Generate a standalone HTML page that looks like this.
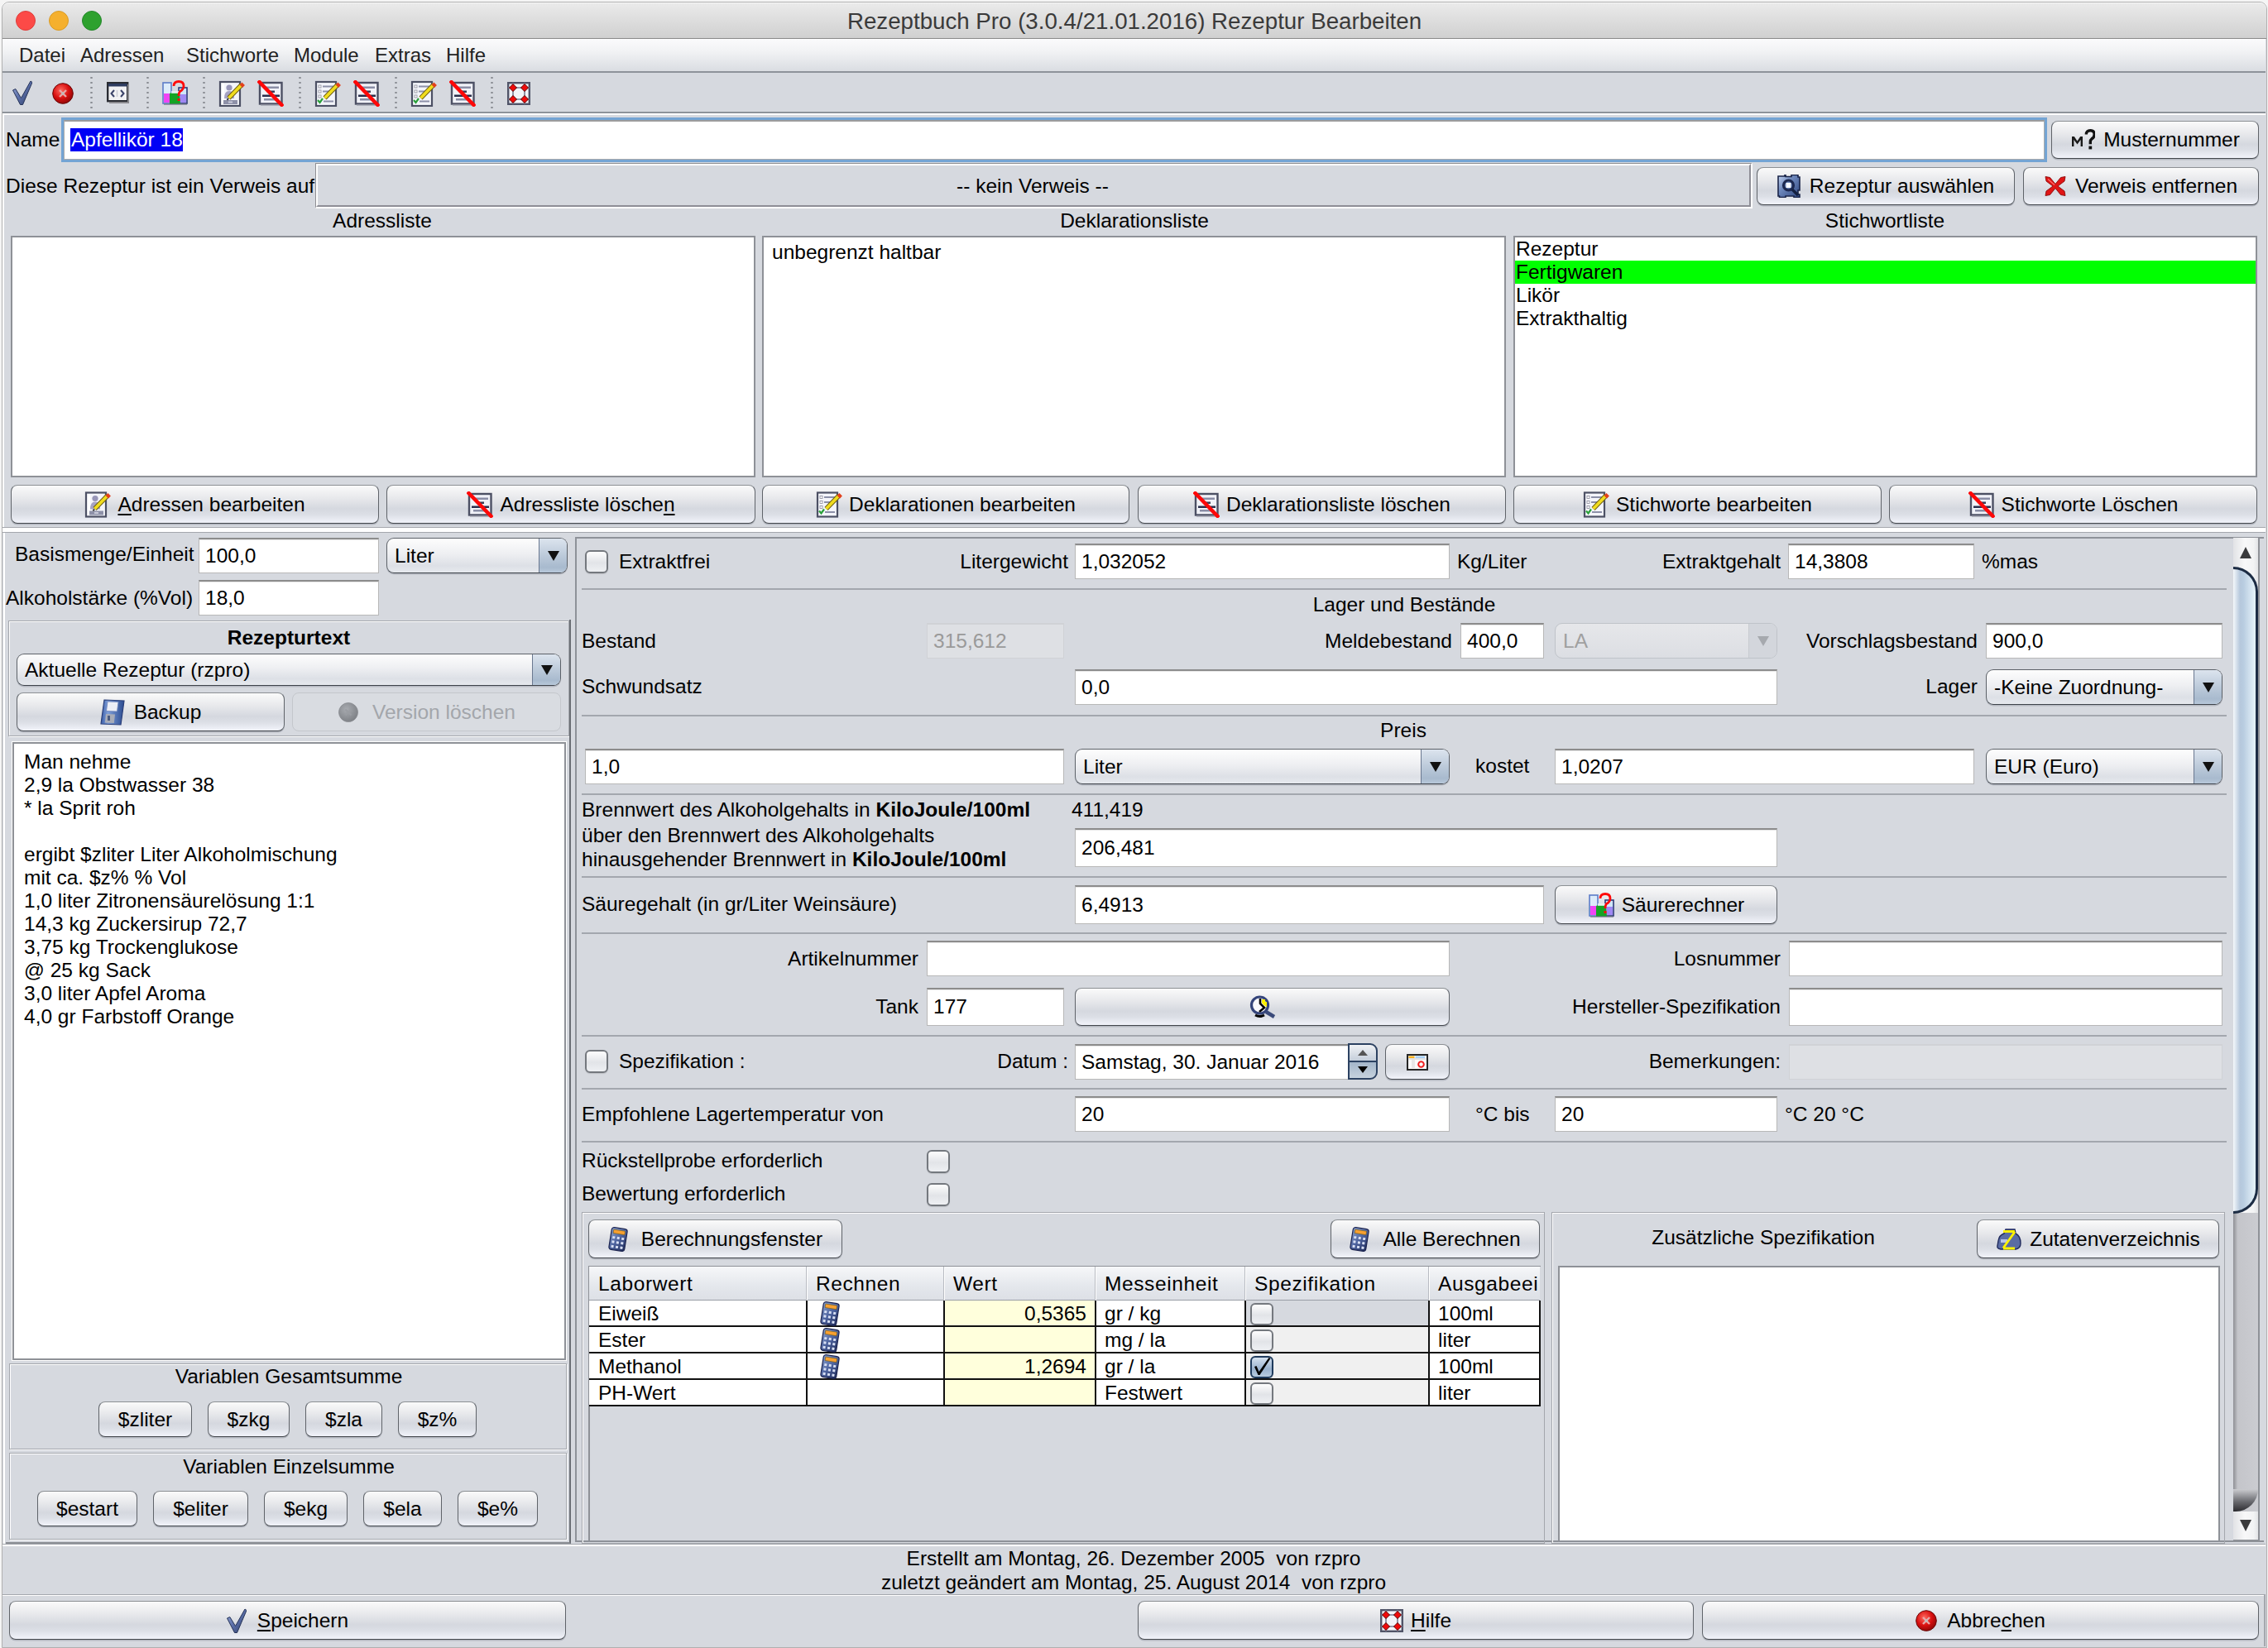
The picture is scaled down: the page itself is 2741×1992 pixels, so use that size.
<!DOCTYPE html><html><head><meta charset="utf-8"><style>
html,body{margin:0;padding:0;}
body{width:2741px;height:1992px;position:relative;overflow:hidden;background:#F5F5F5;font-family:"Liberation Sans",sans-serif;}
.t{position:absolute;white-space:pre;line-height:1;font-family:"Liberation Sans",sans-serif;}
.fld{position:absolute;box-sizing:border-box;background:#fff;border:1.5px solid #B8B8B8;border-top:2px solid #8C8C8C;box-shadow:inset 0 1px 1px rgba(0,0,0,0.10);}
.fld.dis{background:#DEE0E4;border-color:#D0D2D6;box-shadow:none;}
.btn{position:absolute;box-sizing:border-box;border:1.7px solid;border-color:#8C9094 #5F6369 #43474C #5F6369;border-radius:8px;background:linear-gradient(#FAFAFA 0%,#E8E9EC 33%,#D5D8DF 62%,#DCDFE6 78%,#EEF0F7 96%);box-shadow:0 1.5px 0 #B3B7C0;}
.btn.dis{border-color:#C4C7CC;background:#D9DCE1;box-shadow:none;}
.bc{position:absolute;left:0;right:0;top:0;bottom:0;display:flex;align-items:center;justify-content:center;font-size:24.5px;white-space:pre;}
.bc svg{flex:none;}
.cmb{position:absolute;box-sizing:border-box;border:1.8px solid #5C6168;border-bottom-color:#3E434A;border-radius:9px;background:linear-gradient(#FDFDFD 0%,#EEEFF2 45%,#DDE0E6 80%,#E6E9EE 100%);overflow:hidden;box-shadow:0 1.5px 0 #B3B7C0;}
.cmb .ca{position:absolute;right:0;top:0;bottom:0;border-left:1.5px solid #6A7890;background:linear-gradient(#DCE4EE 0%,#BCCADA 50%,#A8BACE 85%,#B8C8DA 100%);}
.cmb .tri{position:absolute;left:50%;top:50%;margin-left:-7px;margin-top:-6px;width:0;height:0;border-left:7px solid transparent;border-right:7px solid transparent;border-top:12px solid #111;}
.cmb.dis{border-color:#BFC3C9;background:linear-gradient(#E6E7EA,#DCDEE3);box-shadow:none;}
.cmb.dis .ca{border-left-color:#C8CBD0;background:#D3D6DC;}
.cmb.dis .tri{border-top-color:#A6A9AE;}
.chk{position:absolute;box-sizing:border-box;border:2px solid #74787E;border-radius:6px;background:linear-gradient(#FDFDFD,#E2E4E8 55%,#EEF0F3);box-shadow:0 1px 1px rgba(0,0,0,0.12);}
</style></head><body><div style="position:absolute;left:2px;top:2px;width:2738px;height:1990px;box-sizing:border-box;background:#D6D9DF;border:1px solid #B0B0B0;border-radius:9px 9px 0 0;overflow:hidden;"></div>
<div style="position:absolute;left:3px;top:3px;width:2736px;height:44px;box-sizing:border-box;background:linear-gradient(#EAEAEA,#D0D0D0);border-radius:8px 8px 0 0;border-top:1px solid #F8F8F8;border-bottom:1.5px solid #8A8A8A;"></div>
<div style="position:absolute;left:19px;top:13px;width:24px;height:24px;box-sizing:border-box;background:#FC4A47;border-radius:50%;border:1px solid #DE3C39;"></div>
<div style="position:absolute;left:59px;top:13px;width:24px;height:24px;box-sizing:border-box;background:#F5B02E;border-radius:50%;border:1px solid #D99B25;"></div>
<div style="position:absolute;left:99px;top:13px;width:24px;height:24px;box-sizing:border-box;background:#2EA12E;border-radius:50%;border:1px solid #24872A;"></div>
<div class="t" style="left:1371px;transform:translateX(-50%);top:11.55px;font-size:27.7px;font-weight:400;color:#3A3A3A;">Rezeptbuch Pro (3.0.4/21.01.2016) Rezeptur Bearbeiten</div>
<div style="position:absolute;left:3px;top:47px;width:2735px;height:41px;box-sizing:border-box;background:linear-gradient(#FBFBFC 0%,#F1F2F4 40%,#DADDE2 100%);border-bottom:2px solid #8E939A;"></div>
<div class="t" style="left:23px;top:54.68px;font-size:24px;font-weight:400;color:#222;">Datei</div>
<div class="t" style="left:97px;top:54.68px;font-size:24px;font-weight:400;color:#222;">Adressen</div>
<div class="t" style="left:225px;top:54.68px;font-size:24px;font-weight:400;color:#222;">Stichworte</div>
<div class="t" style="left:355px;top:54.68px;font-size:24px;font-weight:400;color:#222;">Module</div>
<div class="t" style="left:453px;top:54.68px;font-size:24px;font-weight:400;color:#222;">Extras</div>
<div class="t" style="left:539px;top:54.68px;font-size:24px;font-weight:400;color:#222;">Hilfe</div>
<div style="position:absolute;left:3px;top:89px;width:2735px;height:48px;box-sizing:border-box;background:#D6D9DF;border-bottom:2px solid #8E939A;"></div>
<div style="position:absolute;left:109px;top:91px;width:3px;height:42px;box-sizing:border-box;background-image:radial-gradient(circle,#8A8D93 1px,transparent 1.4px);background-size:3px 6px;"></div>
<div style="position:absolute;left:177px;top:91px;width:3px;height:42px;box-sizing:border-box;background-image:radial-gradient(circle,#8A8D93 1px,transparent 1.4px);background-size:3px 6px;"></div>
<div style="position:absolute;left:245px;top:91px;width:3px;height:42px;box-sizing:border-box;background-image:radial-gradient(circle,#8A8D93 1px,transparent 1.4px);background-size:3px 6px;"></div>
<div style="position:absolute;left:361px;top:91px;width:3px;height:42px;box-sizing:border-box;background-image:radial-gradient(circle,#8A8D93 1px,transparent 1.4px);background-size:3px 6px;"></div>
<div style="position:absolute;left:477px;top:91px;width:3px;height:42px;box-sizing:border-box;background-image:radial-gradient(circle,#8A8D93 1px,transparent 1.4px);background-size:3px 6px;"></div>
<div style="position:absolute;left:593px;top:91px;width:3px;height:42px;box-sizing:border-box;background-image:radial-gradient(circle,#8A8D93 1px,transparent 1.4px);background-size:3px 6px;"></div>

<svg width="0" height="0" style="position:absolute">
<defs>
<linearGradient id="gBlueChk" x1="0" y1="0" x2="1" y2="1"><stop offset="0" stop-color="#9AAAD8"/><stop offset="0.5" stop-color="#5A6EA8"/><stop offset="1" stop-color="#2C3A62"/></linearGradient>
<radialGradient id="gRed" cx="0.4" cy="0.35" r="0.7"><stop offset="0" stop-color="#FF6A60"/><stop offset="0.55" stop-color="#D81010"/><stop offset="1" stop-color="#8A0606"/></radialGradient>
<radialGradient id="gGray" cx="0.4" cy="0.35" r="0.7"><stop offset="0" stop-color="#A8ABB0"/><stop offset="1" stop-color="#7C7F84"/></radialGradient>
<linearGradient id="gCalc" x1="0" y1="0" x2="1" y2="1"><stop offset="0" stop-color="#8CA4D0"/><stop offset="0.5" stop-color="#4E64A0"/><stop offset="1" stop-color="#1E2A58"/></linearGradient>
<linearGradient id="gFilm" x1="0" y1="0" x2="1" y2="1"><stop offset="0" stop-color="#C8D8F4"/><stop offset="0.4" stop-color="#6E88BC"/><stop offset="1" stop-color="#2E4680"/></linearGradient>
<linearGradient id="gFlop" x1="0" y1="0" x2="1" y2="0"><stop offset="0" stop-color="#3A5CA8"/><stop offset="0.3" stop-color="#7E9ED8"/><stop offset="1" stop-color="#2A4A90"/></linearGradient>
<symbol id="iChk" viewBox="0 0 24 30"><path d="M0.5 12 L3.8 10.5 L10.5 21.5 L22 1 L24 2.5 L12.5 29.5 L9.5 29.5 Z" fill="url(#gBlueChk)" stroke="#263458" stroke-width="1"/></symbol>
<symbol id="iStop" viewBox="0 0 26 28"><circle cx="13" cy="14" r="12.3" fill="url(#gRed)" stroke="#6A0808" stroke-width="1"/><path d="M9 10 L17 18 M17 10 L9 18" stroke="#E8A8A8" stroke-width="2.4"/><rect x="11.5" y="12.5" width="3" height="3" fill="#BDBDBD"/></symbol>
<symbol id="iStopGray" viewBox="0 0 26 26"><circle cx="13" cy="13" r="11.5" fill="url(#gGray)" stroke="#8A8D92" stroke-width="0.8"/><path d="M9.5 9.5 L16.5 16.5 M16.5 9.5 L9.5 16.5" stroke="#9A9DA2" stroke-width="2"/></symbol>
<symbol id="iWin" viewBox="0 0 27 26"><rect x="1.2" y="1.2" width="24" height="22" fill="#F2F2F4" stroke="#2A2C32" stroke-width="2.4"/><rect x="2" y="2" width="22.5" height="3.5" fill="#2E3C60"/><path d="M9 10 L5.5 14 L9 18 M17 10 L20.5 14 L17 18" stroke="#3A4268" stroke-width="2" fill="none"/><path d="M12.5 10 V18" stroke="#C8CAD4" stroke-width="1.5"/><rect x="3" y="24" width="24" height="2" fill="#8A8A8E"/><rect x="25" y="3" width="2" height="22" fill="#8A8A8E"/></symbol>
<symbol id="iFlask" viewBox="0 0 32 30"><rect x="2" y="3" width="10" height="25" fill="#DCEBFA" stroke="#5C7CC8" stroke-width="1.6"/><rect x="3" y="16" width="8" height="11" fill="#F044F4"/><rect x="21" y="9" width="10" height="19" fill="#CFE6F8" stroke="#2E3A78" stroke-width="1.6"/><rect x="22" y="17" width="8" height="10" fill="#A088F4"/><path d="M10 17 Q10 15 13 15 L19 15 Q22 15 22 18 L23 29 L10 29 Z" fill="#14A424"/><rect x="12" y="13" width="9" height="3" fill="#E8F4F4" opacity="0.8"/><path d="M15 7 Q15 1.5 21 1.5 Q27 1.5 27 7 Q27 11 22.5 13.5 Q21 15 21 19" stroke="#FF0A0A" stroke-width="2.8" fill="none"/><rect x="19.5" y="22" width="3" height="3" fill="#FF0A0A"/><rect x="3" y="28" width="28" height="2" fill="#6A6E80" opacity="0.6"/></symbol>
<symbol id="iEdit" viewBox="0 0 32 32"><rect x="2" y="2" width="24" height="29" fill="#F4F5FA" stroke="#4C5064" stroke-width="2.2"/><rect x="4" y="4" width="3" height="25" fill="#FFFFFF"/><circle cx="13" cy="9" r="3.6" fill="#9896B8"/><path d="M7 22 Q7 13 13 13 Q19 13 19 22 Z" fill="#A6A3C4"/><rect x="6" y="24" width="17" height="5" fill="#8E91A8"/><rect x="12" y="25.5" width="5" height="2" fill="#C8CAD8"/><path d="M12.5 21.5 L28 5.5" stroke="#6A5A10" stroke-width="5.6"/><path d="M12.5 21.5 L28 5.5" stroke="#F0DC1E" stroke-width="3.8"/><path d="M12 22 L10.5 24" stroke="#333" stroke-width="2"/><path d="M27 4 L30.5 7.5" stroke="#E2401C" stroke-width="4"/></symbol>
<symbol id="iCEdit" viewBox="0 0 32 32"><rect x="2" y="2" width="24" height="29" fill="#F4F5FA" stroke="#4C5064" stroke-width="2.2"/><rect x="5" y="6" width="3" height="3" fill="#fff" stroke="#8A8A9A" stroke-width="0.8"/><rect x="10" y="6.5" width="13" height="2" fill="#8C90A8"/><rect x="5" y="12" width="3" height="3" fill="#fff" stroke="#8A8A9A" stroke-width="0.8"/><rect x="10" y="12.5" width="9" height="2" fill="#8C90A8"/><rect x="5" y="18" width="3" height="3" fill="#fff" stroke="#8A8A9A" stroke-width="0.8"/><path d="M4 24 L6.5 27 L10 22" stroke="#2AA03A" stroke-width="2.2" fill="none"/><rect x="11" y="24.5" width="12" height="2" fill="#8C90A8"/><path d="M12.5 21.5 L28 5.5" stroke="#6A5A10" stroke-width="5.6"/><path d="M12.5 21.5 L28 5.5" stroke="#F0DC1E" stroke-width="3.8"/><path d="M27 4 L30.5 7.5" stroke="#E2401C" stroke-width="4"/></symbol>
<symbol id="iDel" viewBox="0 0 32 32"><rect x="3" y="3" width="26.5" height="25.5" fill="#F1F2F8" stroke="#4C5064" stroke-width="2.4"/><rect x="7" y="7.5" width="19" height="2.5" fill="#8A8EA6"/><rect x="12" y="12.5" width="9" height="2.5" fill="#3A3E56"/><rect x="6" y="17.5" width="21" height="2.5" fill="#2A2E4C"/><rect x="8" y="22" width="15" height="2.5" fill="#8A8EA6"/><rect x="4" y="29" width="27" height="2" fill="#9A9CA8" opacity="0.7"/><path d="M1 0.5 L31 31.5" stroke="#FF0808" stroke-width="4.4"/></symbol>
<symbol id="iGrid" viewBox="0 0 28 28"><rect x="1.2" y="1.2" width="25.6" height="25.6" fill="#F4F6FA" stroke="#505468" stroke-width="2.4"/><path d="M7 1 V27 M21 1 V27 M1 7 H27 M1 21 H27" stroke="#7A7E92" stroke-width="1.6"/><rect x="8.5" y="8.5" width="11" height="11" fill="#F2F4F8"/><g fill="#F00A0A" stroke="#5A0000" stroke-width="1"><path d="M7 2.5 L11.5 7 L7 11.5 L2.5 7 Z"/><path d="M21 2.5 L25.5 7 L21 11.5 L16.5 7 Z"/><path d="M7 16.5 L11.5 21 L7 25.5 L2.5 21 Z"/><path d="M21 16.5 L25.5 21 L21 25.5 L16.5 21 Z"/></g></symbol>
<symbol id="iX" viewBox="0 0 26 26"><path d="M1 1.5 L6.5 2.5 L13 10.5 L19.5 2.5 L25 1.5 L24 7 L16 13 L24 19 L25 24.5 L19.5 23.5 L13 15.5 L6.5 23.5 L1 24.5 L2 19 L10 13 L2 7 Z" fill="#E01414" stroke="#8A0A0A" stroke-width="0.9" stroke-linejoin="round"/><path d="M4 4.5 L12 11.5" stroke="#FF7070" stroke-width="1.2"/></symbol>
<symbol id="iFilm" viewBox="0 0 28 28"><path d="M1 2 H9 V0.5 H10 V2.5 H17 V0.5 H25 V3 H27 V19 H25 V24 H27 V27.5 H20 V26 H10 V27.5 H2.5 V26 H1 Z" fill="url(#gFilm)" stroke="#1A2448" stroke-width="1.6"/><circle cx="13.5" cy="13" r="6" fill="none" stroke="#1C2850" stroke-width="3.2"/><rect x="10.5" y="10" width="6" height="6" fill="#F4F8FF"/><path d="M18 18 L25 25" stroke="#142040" stroke-width="3.4"/></symbol>
<symbol id="iFloppy" viewBox="0 0 30 32"><path d="M5 1 L29 2 L25 31 L1 30 Z" fill="url(#gFlop)" stroke="#2A3E78" stroke-width="1.2"/><path d="M9 3 L22 3.5 L20.5 15 L7.5 14.5 Z" fill="#ECEEF6" stroke="#6A80B8" stroke-width="0.8"/><path d="M7 18 L18 18.5 L16.8 29 L5.8 28.5 Z" fill="#A8ACB8"/><rect x="9" y="20" width="3" height="6" fill="#4A5A80"/></symbol>
<symbol id="iCalc" viewBox="0 0 24 30"><g transform="rotate(9 12 15)"><rect x="2.5" y="1.5" width="19" height="27" rx="3" fill="url(#gCalc)" stroke="#1C2450" stroke-width="1.2"/><rect x="5" y="4" width="14" height="4.5" fill="#F8A030" stroke="#6A5A20" stroke-width="0.6"/><g fill="#D8E0F4"><rect x="5" y="12" width="3" height="3"/><rect x="10.5" y="12" width="3" height="3"/><rect x="16" y="12" width="3" height="3"/><rect x="5" y="17.5" width="3" height="3"/><rect x="10.5" y="17.5" width="3" height="3"/><rect x="16" y="17.5" width="3" height="3"/><rect x="5" y="23" width="3" height="3"/><rect x="10.5" y="23" width="3" height="3"/><rect x="16" y="23" width="3" height="3"/></g></g></symbol>
<symbol id="iMag" viewBox="0 0 32 28"><circle cx="12.5" cy="12" r="10" fill="#F8F8FC" stroke="#34447A" stroke-width="3.2"/><path d="M13 4 V10 L18 15 L12 20" stroke="#000" stroke-width="2.6" fill="none"/><path d="M15 5 H19 V8 H21 V14 L17.5 12 L15 9 Z" fill="#FFF000"/><path d="M7 24 Q12.5 27 18 24" stroke="#000" stroke-width="3" fill="none"/><path d="M20 20 L30 26" stroke="#3A4A7A" stroke-width="4.4"/></symbol>
<symbol id="iCal" viewBox="0 0 26 20"><rect x="1" y="1" width="24" height="18" fill="#FBFBFB" stroke="#262626" stroke-width="2"/><rect x="2.5" y="2.5" width="7" height="2.5" fill="#F8B020"/><rect x="10.5" y="2.5" width="11.5" height="2.5" fill="#A8D0F8"/><rect x="2.5" y="5.5" width="21" height="1" fill="#C8C8C8"/><rect x="6" y="7" width="4" height="10" fill="#E8E8E8"/><circle cx="17.5" cy="12.5" r="3.3" fill="none" stroke="#F02020" stroke-width="2"/></symbol>
<symbol id="iZut" viewBox="0 0 31 28"><path d="M3 16 Q4 9 10 7 L12 2 L23 2 L24 7 Q30 10 30 19 Q30 25 24 26 L6 26 Q1 25 2 22 Z" fill="#5A6CA4" stroke="#202A5C" stroke-width="1.4"/><path d="M6 14 H14 V18 H6 Z" fill="#B8C4E8"/><path d="M9 4.5 H23 M23 5 L9 24.5 M9 25 H23" stroke="#FFF200" stroke-width="2.8" fill="none"/></symbol>
<symbol id="iM" viewBox="0 0 30 26"><path d="M2 21 V9 H4.8 L8.5 14.5 L12.2 9 H15 V21 H12.6 V13 L8.5 18.5 L4.4 13 V21 Z" fill="#1A1A1A"/><path d="M19.3 6.5 Q19.3 1.8 24.3 1.8 Q29.2 1.8 29.2 6.5 Q29.2 9.8 26 11.8 Q24.3 13 24.3 15.5 V18.2" stroke="#111" stroke-width="3.4" fill="none"/><rect x="22.4" y="20.6" width="3.8" height="3.8" fill="#111"/></symbol>
</defs></svg>

<svg style="position:absolute;left:15px;top:97px" width="24" height="30"><use href="#iChk"/></svg>
<svg style="position:absolute;left:63px;top:99px" width="26" height="28"><use href="#iStop"/></svg>
<svg style="position:absolute;left:129px;top:99px" width="27" height="26"><use href="#iWin"/></svg>
<svg style="position:absolute;left:195px;top:97px" width="32" height="30"><use href="#iFlask"/></svg>
<svg style="position:absolute;left:264px;top:97px" width="32" height="32"><use href="#iEdit"/></svg>
<svg style="position:absolute;left:311px;top:97px" width="32" height="32"><use href="#iDel"/></svg>
<svg style="position:absolute;left:380px;top:97px" width="32" height="32"><use href="#iCEdit"/></svg>
<svg style="position:absolute;left:427px;top:97px" width="32" height="32"><use href="#iDel"/></svg>
<svg style="position:absolute;left:496px;top:97px" width="32" height="32"><use href="#iCEdit"/></svg>
<svg style="position:absolute;left:543px;top:97px" width="32" height="32"><use href="#iDel"/></svg>
<svg style="position:absolute;left:613px;top:99px" width="28" height="28"><use href="#iGrid"/></svg>
<div style="position:absolute;left:3px;top:137px;width:2735px;height:500px;box-sizing:border-box;border-top:2px solid #fff;border-left:2px solid #fff;"></div>
<div style="position:absolute;left:3px;top:637px;width:2735px;height:7px;box-sizing:border-box;border-top:1px solid #A4A7AD;border-bottom:1px solid #A4A7AD;background:#fff;"></div>
<div style="position:absolute;left:4px;top:639px;width:2734px;height:2px;box-sizing:border-box;background:#fff;"></div>
<div class="t" style="left:7px;top:157.26px;font-size:24.5px;font-weight:400;color:#000;">Name</div>
<div style="position:absolute;left:74px;top:142px;width:2400px;height:54px;box-sizing:border-box;border:3px solid #74A4D4;background:#fff;"></div>
<div style="position:absolute;left:77px;top:145px;width:2394px;height:48px;box-sizing:border-box;border:1.5px solid #ABABAB;border-top:2px solid #9C9C9C;"></div>
<div style="position:absolute;left:85px;top:155px;width:136px;height:28px;box-sizing:border-box;background:#0000F5;"></div>
<div class="t" style="left:86px;top:157.26px;font-size:24.5px;font-weight:400;color:#fff;">Apfellikör 18</div>
<div class="btn" style="left:2479px;top:146px;width:251px;height:46px;"><div class="bc" style="color:#000"><svg width="30" height="26"><use href="#iM"/></svg><span style="margin-left:10px">Musternummer</span></div></div>
<div class="t" style="left:7px;top:213.26px;font-size:24.5px;font-weight:400;color:#000;">Diese Rezeptur ist ein Verweis auf</div>
<div style="position:absolute;left:381px;top:197px;width:1737px;height:55px;box-sizing:border-box;border-top:1px solid #8E8E92;border-left:1px solid #8E8E92;border-right:2px solid #fff;border-bottom:2px solid #fff;"></div>
<div style="position:absolute;left:382px;top:198px;width:1734px;height:52px;box-sizing:border-box;border-top:2px solid #fff;border-left:2px solid #fff;border-right:2px solid #8E8E96;border-bottom:2px solid #8E8E96;"></div>
<div class="t" style="left:1248px;transform:translateX(-50%);top:213.26px;font-size:24.5px;font-weight:400;color:#000;">-- kein Verweis --</div>
<div class="btn" style="left:2123px;top:202px;width:312px;height:46px;"><div class="bc" style="color:#000"><svg width="28" height="28"><use href="#iFilm"/></svg><span style="margin-left:11px">Rezeptur auswählen</span></div></div>
<div class="btn" style="left:2445px;top:202px;width:285px;height:46px;"><div class="bc" style="color:#000"><svg width="26" height="26"><use href="#iX"/></svg><span style="margin-left:11px">Verweis entfernen</span></div></div>
<div class="t" style="left:462px;transform:translateX(-50%);top:255.26px;font-size:24.5px;font-weight:400;color:#000;">Adressliste</div>
<div class="t" style="left:1371px;transform:translateX(-50%);top:255.26px;font-size:24.5px;font-weight:400;color:#000;">Deklarationsliste</div>
<div class="t" style="left:2278px;transform:translateX(-50%);top:255.26px;font-size:24.5px;font-weight:400;color:#000;">Stichwortliste</div>
<div style="position:absolute;left:13px;top:285px;width:900px;height:292px;box-sizing:border-box;background:#fff;border:2px solid #8E9197;"></div>
<div style="position:absolute;left:921px;top:285px;width:899px;height:292px;box-sizing:border-box;background:#fff;border:2px solid #8E9197;"></div>
<div style="position:absolute;left:1829px;top:285px;width:899px;height:292px;box-sizing:border-box;background:#fff;border:2px solid #8E9197;"></div>
<div class="t" style="left:933px;top:293.26px;font-size:24.5px;font-weight:400;color:#000;">unbegrenzt haltbar</div>
<div style="position:absolute;left:1831px;top:315px;width:895px;height:28px;box-sizing:border-box;background:#00FF00;"></div>
<div class="t" style="left:1832px;top:289.26px;font-size:24.5px;font-weight:400;color:#000;">Rezeptur</div>
<div class="t" style="left:1832px;top:317.26px;font-size:24.5px;font-weight:400;color:#000;">Fertigwaren</div>
<div class="t" style="left:1832px;top:345.26px;font-size:24.5px;font-weight:400;color:#000;">Likör</div>
<div class="t" style="left:1832px;top:373.26px;font-size:24.5px;font-weight:400;color:#000;">Extrakthaltig</div>
<div class="btn" style="left:13px;top:586px;width:445px;height:47px;"><div class="bc" style="color:#000"><svg width="32" height="33"><use href="#iEdit"/></svg><span style="margin-left:8px"><u style="text-decoration-thickness:2px;text-underline-offset:3px">A</u>dressen bearbeiten</span></div></div>
<div class="btn" style="left:467px;top:586px;width:446px;height:47px;"><div class="bc" style="color:#000"><svg width="32" height="32"><use href="#iDel"/></svg><span style="margin-left:8px">Adressliste lösche<u style="text-decoration-thickness:2px;text-underline-offset:3px">n</u></span></div></div>
<div class="btn" style="left:921px;top:586px;width:444px;height:47px;"><div class="bc" style="color:#000"><svg width="32" height="33"><use href="#iCEdit"/></svg><span style="margin-left:8px">Deklarationen bearbeiten</span></div></div>
<div class="btn" style="left:1375px;top:586px;width:445px;height:47px;"><div class="bc" style="color:#000"><svg width="32" height="32"><use href="#iDel"/></svg><span style="margin-left:8px">Deklarationsliste löschen</span></div></div>
<div class="btn" style="left:1829px;top:586px;width:445px;height:47px;"><div class="bc" style="color:#000"><svg width="32" height="33"><use href="#iCEdit"/></svg><span style="margin-left:8px">Stichworte bearbeiten</span></div></div>
<div class="btn" style="left:2283px;top:586px;width:445px;height:47px;"><div class="bc" style="color:#000"><svg width="32" height="32"><use href="#iDel"/></svg><span style="margin-left:8px">Stichworte Löschen</span></div></div>
<div style="position:absolute;left:4px;top:644px;width:2px;height:1222px;box-sizing:border-box;background:#fff;"></div>
<div class="t" style="left:18px;top:658.26px;font-size:24.5px;font-weight:400;color:#000;">Basismenge/Einheit</div>
<div class="fld" style="left:240px;top:650px;width:218px;height:43px;"></div>
<div class="t" style="left:248px;top:659.76px;font-size:24.5px;font-weight:400;color:#000;">100,0</div>
<div class="cmb" style="left:467px;top:650px;width:219px;height:43px;"><div class="ca" style="width:33px"><div class="tri"></div></div></div>
<div class="t" style="left:477px;top:659.76px;font-size:24.5px;font-weight:400;color:#000;">Liter</div>
<div class="t" style="left:7px;top:711.26px;font-size:24.5px;font-weight:400;color:#000;">Alkoholstärke (%Vol)</div>
<div class="fld" style="left:240px;top:701px;width:218px;height:43px;"></div>
<div class="t" style="left:248px;top:710.76px;font-size:24.5px;font-weight:400;color:#000;">18,0</div>
<div style="position:absolute;left:10px;top:750px;width:678px;height:140px;box-sizing:border-box;border:1px solid #A4A7AD;box-shadow:inset 1px 1px 0 #fff, 1px 1px 0 #fff;"></div>
<div class="t" style="left:349px;transform:translateX(-50%);top:759.26px;font-size:24.5px;font-weight:700;color:#000;">Rezepturtext</div>
<div class="cmb" style="left:20px;top:790px;width:658px;height:39px;"><div class="ca" style="width:33px"><div class="tri"></div></div></div>
<div class="t" style="left:30px;top:797.76px;font-size:24.5px;font-weight:400;color:#000;">Aktuelle Rezeptur (rzpro)</div>
<div class="btn" style="left:20px;top:837px;width:324px;height:47px;"><div class="bc" style="color:#000"><svg width="30" height="32"><use href="#iFloppy"/></svg><span style="margin-left:11px">Backup</span></div></div>
<div class="btn dis" style="left:353px;top:837px;width:325px;height:47px;"><div class="bc" style="color:#A3A6AB"><svg width="26" height="26"><use href="#iStopGray"/></svg><span style="margin-left:16px">Version löschen</span></div></div>
<div style="position:absolute;left:15px;top:897px;width:669px;height:747px;box-sizing:border-box;background:#fff;border:2px solid #8E9197;box-shadow:0 0 0 1px #fff;"></div>
<div class="t" style="left:29px;top:909.26px;font-size:24.5px;font-weight:400;color:#000;">Man nehme</div>
<div class="t" style="left:29px;top:937.26px;font-size:24.5px;font-weight:400;color:#000;">2,9 la Obstwasser 38</div>
<div class="t" style="left:29px;top:965.26px;font-size:24.5px;font-weight:400;color:#000;">* la Sprit roh</div>
<div class="t" style="left:29px;top:1021.26px;font-size:24.5px;font-weight:400;color:#000;">ergibt $zliter Liter Alkoholmischung</div>
<div class="t" style="left:29px;top:1049.26px;font-size:24.5px;font-weight:400;color:#000;">mit ca. $z% % Vol</div>
<div class="t" style="left:29px;top:1077.26px;font-size:24.5px;font-weight:400;color:#000;">1,0 liter Zitronensäurelösung 1:1</div>
<div class="t" style="left:29px;top:1105.26px;font-size:24.5px;font-weight:400;color:#000;">14,3 kg Zuckersirup 72,7</div>
<div class="t" style="left:29px;top:1133.26px;font-size:24.5px;font-weight:400;color:#000;">3,75 kg Trockenglukose</div>
<div class="t" style="left:29px;top:1161.26px;font-size:24.5px;font-weight:400;color:#000;">@ 25 kg Sack</div>
<div class="t" style="left:29px;top:1189.26px;font-size:24.5px;font-weight:400;color:#000;">3,0 liter Apfel Aroma</div>
<div class="t" style="left:29px;top:1217.26px;font-size:24.5px;font-weight:400;color:#000;">4,0 gr Farbstoff Orange</div>
<div style="position:absolute;left:11px;top:1648px;width:674px;height:104px;box-sizing:border-box;border:1px solid #A4A7AD;box-shadow:inset 1px 1px 0 #fff, 1px 1px 0 #fff;"></div>
<div class="t" style="left:349px;transform:translateX(-50%);top:1652.26px;font-size:24.5px;font-weight:400;color:#000;">Variablen Gesamtsumme</div>
<div class="btn" style="left:119px;top:1694px;width:113px;height:43px;"><div class="bc" style="color:#000"><span style="margin-left:0px">$zliter</span></div></div>
<div class="btn" style="left:251px;top:1694px;width:99px;height:43px;"><div class="bc" style="color:#000"><span style="margin-left:0px">$zkg</span></div></div>
<div class="btn" style="left:369px;top:1694px;width:93px;height:43px;"><div class="bc" style="color:#000"><span style="margin-left:0px">$zla</span></div></div>
<div class="btn" style="left:481px;top:1694px;width:95px;height:43px;"><div class="bc" style="color:#000"><span style="margin-left:0px">$z%</span></div></div>
<div style="position:absolute;left:11px;top:1756px;width:674px;height:105px;box-sizing:border-box;border:1px solid #A4A7AD;box-shadow:inset 1px 1px 0 #fff, 1px 1px 0 #fff;"></div>
<div class="t" style="left:349px;transform:translateX(-50%);top:1761.26px;font-size:24.5px;font-weight:400;color:#000;">Variablen Einzelsumme</div>
<div class="btn" style="left:45px;top:1802px;width:121px;height:43px;"><div class="bc" style="color:#000"><span style="margin-left:0px">$estart</span></div></div>
<div class="btn" style="left:185px;top:1802px;width:115px;height:43px;"><div class="bc" style="color:#000"><span style="margin-left:0px">$eliter</span></div></div>
<div class="btn" style="left:319px;top:1802px;width:101px;height:43px;"><div class="bc" style="color:#000"><span style="margin-left:0px">$ekg</span></div></div>
<div class="btn" style="left:439px;top:1802px;width:95px;height:43px;"><div class="bc" style="color:#000"><span style="margin-left:0px">$ela</span></div></div>
<div class="btn" style="left:553px;top:1802px;width:97px;height:43px;"><div class="bc" style="color:#000"><span style="margin-left:0px">$e%</span></div></div>
<div style="position:absolute;left:7px;top:749px;width:683px;height:1117px;box-sizing:border-box;border-right:2px solid #6A6E74;border-bottom:2px solid #8A8E94;"></div>
<div style="position:absolute;left:695px;top:649px;width:2041px;height:1215px;box-sizing:border-box;border:2px solid #8E9299;border-right:none;"></div>
<div class="chk" style="left:707px;top:665px;width:28px;height:28px;"></div>
<div class="t" style="left:748px;top:667.26px;font-size:24.5px;font-weight:400;color:#000;">Extraktfrei</div>
<div class="t" style="right:1450px;top:667.26px;font-size:24.5px;font-weight:400;color:#000;">Litergewicht</div>
<div class="fld" style="left:1299px;top:657px;width:453px;height:43px;"></div>
<div class="t" style="left:1307px;top:666.76px;font-size:24.5px;font-weight:400;color:#000;">1,032052</div>
<div class="t" style="left:1761px;top:667.26px;font-size:24.5px;font-weight:400;color:#000;">Kg/Liter</div>
<div class="t" style="right:589px;top:667.26px;font-size:24.5px;font-weight:400;color:#000;">Extraktgehalt</div>
<div class="fld" style="left:2161px;top:657px;width:225px;height:43px;"></div>
<div class="t" style="left:2169px;top:666.76px;font-size:24.5px;font-weight:400;color:#000;">14,3808</div>
<div class="t" style="left:2395px;top:667.26px;font-size:24.5px;font-weight:400;color:#000;">%mas</div>
<div style="position:absolute;left:703px;top:711px;width:1988px;height:2px;box-sizing:border-box;background:#A3A7AE;"></div>
<div class="t" style="left:1697px;transform:translateX(-50%);top:719.26px;font-size:24.5px;font-weight:400;color:#000;">Lager und Bestände</div>
<div class="t" style="left:703px;top:763.26px;font-size:24.5px;font-weight:400;color:#000;">Bestand</div>
<div class="fld dis" style="left:1120px;top:753px;width:166px;height:43px;"></div>
<div class="t" style="left:1128px;top:762.76px;font-size:24.5px;font-weight:400;color:#9a9a9a;">315,612</div>
<div class="t" style="right:986px;top:763.26px;font-size:24.5px;font-weight:400;color:#000;">Meldebestand</div>
<div class="fld" style="left:1765px;top:753px;width:101px;height:43px;"></div>
<div class="t" style="left:1773px;top:762.76px;font-size:24.5px;font-weight:400;color:#000;">400,0</div>
<div class="cmb dis" style="left:1879px;top:753px;width:269px;height:43px;"><div class="ca" style="width:33px"><div class="tri"></div></div></div>
<div class="t" style="left:1889px;top:762.76px;font-size:24.5px;font-weight:400;color:#a0a0a0;">LA</div>
<div class="t" style="right:351px;top:763.26px;font-size:24.5px;font-weight:400;color:#000;">Vorschlagsbestand</div>
<div class="fld" style="left:2400px;top:753px;width:286px;height:43px;"></div>
<div class="t" style="left:2408px;top:762.76px;font-size:24.5px;font-weight:400;color:#000;">900,0</div>
<div class="t" style="left:703px;top:818.26px;font-size:24.5px;font-weight:400;color:#000;">Schwundsatz</div>
<div class="fld" style="left:1299px;top:809px;width:849px;height:43px;"></div>
<div class="t" style="left:1307px;top:818.76px;font-size:24.5px;font-weight:400;color:#000;">0,0</div>
<div class="t" style="right:351px;top:818.26px;font-size:24.5px;font-weight:400;color:#000;">Lager</div>
<div class="cmb" style="left:2400px;top:809px;width:286px;height:43px;"><div class="ca" style="width:33px"><div class="tri"></div></div></div>
<div class="t" style="left:2410px;top:818.76px;font-size:24.5px;font-weight:400;color:#000;">-Keine Zuordnung-</div>
<div style="position:absolute;left:703px;top:864px;width:1988px;height:2px;box-sizing:border-box;background:#A3A7AE;"></div>
<div class="t" style="left:1696px;transform:translateX(-50%);top:871.26px;font-size:24.5px;font-weight:400;color:#000;">Preis</div>
<div class="fld" style="left:707px;top:905px;width:579px;height:43px;"></div>
<div class="t" style="left:715px;top:914.76px;font-size:24.5px;font-weight:400;color:#000;">1,0</div>
<div class="cmb" style="left:1299px;top:905px;width:453px;height:43px;"><div class="ca" style="width:33px"><div class="tri"></div></div></div>
<div class="t" style="left:1309px;top:914.76px;font-size:24.5px;font-weight:400;color:#000;">Liter</div>
<div class="t" style="left:1783px;top:914.26px;font-size:24.5px;font-weight:400;color:#000;">kostet</div>
<div class="fld" style="left:1879px;top:905px;width:507px;height:43px;"></div>
<div class="t" style="left:1887px;top:914.76px;font-size:24.5px;font-weight:400;color:#000;">1,0207</div>
<div class="cmb" style="left:2400px;top:905px;width:286px;height:43px;"><div class="ca" style="width:33px"><div class="tri"></div></div></div>
<div class="t" style="left:2410px;top:914.76px;font-size:24.5px;font-weight:400;color:#000;">EUR (Euro)</div>
<div style="position:absolute;left:703px;top:959px;width:1988px;height:2px;box-sizing:border-box;background:#A3A7AE;"></div>
<div class="t" style="left:703px;top:967.26px;font-size:24.5px;font-weight:400;color:#000;">Brennwert des Alkoholgehalts in <b>KiloJoule/100ml</b></div>
<div class="t" style="left:1295px;top:967.26px;font-size:24.5px;font-weight:400;color:#000;">411,419</div>
<div class="t" style="left:703px;top:997.76px;font-size:24.5px;font-weight:400;color:#000;">über den Brennwert des Alkoholgehalts</div>
<div class="t" style="left:703px;top:1027.26px;font-size:24.5px;font-weight:400;color:#000;">hinausgehender Brennwert in <b>KiloJoule/100ml</b></div>
<div class="fld" style="left:1299px;top:1001px;width:849px;height:47px;"></div>
<div class="t" style="left:1307px;top:1012.76px;font-size:24.5px;font-weight:400;color:#000;">206,481</div>
<div style="position:absolute;left:703px;top:1059px;width:1988px;height:2px;box-sizing:border-box;background:#A3A7AE;"></div>
<div class="t" style="left:703px;top:1081.26px;font-size:24.5px;font-weight:400;color:#000;">Säuregehalt (in gr/Liter Weinsäure)</div>
<div class="fld" style="left:1299px;top:1070px;width:567px;height:47px;"></div>
<div class="t" style="left:1307px;top:1081.76px;font-size:24.5px;font-weight:400;color:#000;">6,4913</div>
<div class="btn" style="left:1879px;top:1070px;width:269px;height:47px;"><div class="bc" style="color:#000"><svg width="32" height="30"><use href="#iFlask"/></svg><span style="margin-left:9px">Säurerechner</span></div></div>
<div style="position:absolute;left:703px;top:1127px;width:1988px;height:2px;box-sizing:border-box;background:#A3A7AE;"></div>
<div class="t" style="right:1631px;top:1147.26px;font-size:24.5px;font-weight:400;color:#000;">Artikelnummer</div>
<div class="fld" style="left:1120px;top:1137px;width:632px;height:43px;"></div>
<div class="t" style="right:589px;top:1147.26px;font-size:24.5px;font-weight:400;color:#000;">Losnummer</div>
<div class="fld" style="left:2162px;top:1137px;width:524px;height:43px;"></div>
<div class="t" style="right:1631px;top:1205.26px;font-size:24.5px;font-weight:400;color:#000;">Tank</div>
<div class="fld" style="left:1120px;top:1194px;width:166px;height:46px;"></div>
<div class="t" style="left:1128px;top:1205.26px;font-size:24.5px;font-weight:400;color:#000;">177</div>
<div class="btn" style="left:1299px;top:1194px;width:453px;height:46px;"><div class="bc" style="color:#000"><svg width="32" height="28"><use href="#iMag"/></svg><span style="margin-left:0px"></span></div></div>
<div class="t" style="right:589px;top:1205.26px;font-size:24.5px;font-weight:400;color:#000;">Hersteller-Spezifikation</div>
<div class="fld" style="left:2162px;top:1194px;width:524px;height:46px;"></div>
<div style="position:absolute;left:703px;top:1251px;width:1988px;height:2px;box-sizing:border-box;background:#A3A7AE;"></div>
<div class="chk" style="left:707px;top:1269px;width:28px;height:28px;"></div>
<div class="t" style="left:748px;top:1271.26px;font-size:24.5px;font-weight:400;color:#000;">Spezifikation :</div>
<div class="t" style="right:1450px;top:1271.26px;font-size:24.5px;font-weight:400;color:#000;">Datum :</div>
<div class="fld" style="left:1299px;top:1262px;width:332px;height:43px;"></div>
<div class="t" style="left:1307px;top:1271.76px;font-size:24.5px;font-weight:400;color:#000;">Samstag, 30. Januar 2016</div>
<div style="position:absolute;left:1629px;top:1261px;width:36px;height:44px;box-sizing:border-box;border:2px solid #2C4262;border-radius:0 9px 9px 0;overflow:hidden;background:linear-gradient(#F0F2F5 0%,#C4CEDA 48%,#2C4262 48%,#2C4262 53%,#A4B6CA 53%,#C6D2DE 100%);"></div>
<svg style="position:absolute;left:1637px;top:1266px" width="20" height="34"><path d="M4 10 L10 3 L16 10 Z" fill="#555"/><path d="M4 23 L10 31 L16 23 Z" fill="#000"/></svg>
<div class="btn" style="left:1674px;top:1262px;width:78px;height:43px;"><div class="bc" style="color:#000"><svg width="26" height="20"><use href="#iCal"/></svg><span style="margin-left:0px"></span></div></div>
<div class="t" style="right:589px;top:1271.26px;font-size:24.5px;font-weight:400;color:#000;">Bemerkungen:</div>
<div class="fld dis" style="left:2162px;top:1262px;width:524px;height:43px;"></div>
<div style="position:absolute;left:703px;top:1315px;width:1988px;height:2px;box-sizing:border-box;background:#A3A7AE;"></div>
<div class="t" style="left:703px;top:1335.26px;font-size:24.5px;font-weight:400;color:#000;">Empfohlene Lagertemperatur von</div>
<div class="fld" style="left:1299px;top:1325px;width:453px;height:43px;"></div>
<div class="t" style="left:1307px;top:1334.76px;font-size:24.5px;font-weight:400;color:#000;">20</div>
<div class="t" style="left:1783px;top:1335.26px;font-size:24.5px;font-weight:400;color:#000;">°C bis</div>
<div class="fld" style="left:1879px;top:1325px;width:269px;height:43px;"></div>
<div class="t" style="left:1887px;top:1334.76px;font-size:24.5px;font-weight:400;color:#000;">20</div>
<div class="t" style="left:2157px;top:1335.26px;font-size:24.5px;font-weight:400;color:#000;">°C 20 °C</div>
<div style="position:absolute;left:703px;top:1379px;width:1988px;height:2px;box-sizing:border-box;background:#A3A7AE;"></div>
<div class="t" style="left:703px;top:1391.26px;font-size:24.5px;font-weight:400;color:#000;">Rückstellprobe erforderlich</div>
<div class="chk" style="left:1120px;top:1390px;width:28px;height:28px;"></div>
<div class="t" style="left:703px;top:1431.26px;font-size:24.5px;font-weight:400;color:#000;">Bewertung erforderlich</div>
<div class="chk" style="left:1120px;top:1430px;width:28px;height:28px;"></div>
<div style="position:absolute;left:703px;top:1465px;width:1164px;height:401px;box-sizing:border-box;border:1px solid #A4A7AD;box-shadow:inset 1px 1px 0 #fff;"></div>
<div class="btn" style="left:711px;top:1474px;width:307px;height:47px;"><div class="bc" style="color:#000"><svg width="24" height="30"><use href="#iCalc"/></svg><span style="margin-left:16px">Berechnungsfenster</span></div></div>
<div class="btn" style="left:1608px;top:1474px;width:253px;height:47px;"><div class="bc" style="color:#000"><svg width="24" height="30"><use href="#iCalc"/></svg><span style="margin-left:16px">Alle Berechnen</span></div></div>
<div style="position:absolute;left:711px;top:1530px;width:1151px;height:332px;box-sizing:border-box;border-left:2px solid #8E9197;border-top:1px solid #8E9197;"></div>
<div style="position:absolute;left:712px;top:1531px;width:1149px;height:41px;box-sizing:border-box;background:linear-gradient(#F6F7F9,#E4E7EC 60%,#DDE0E6);border-bottom:1px solid #9A9EA6;"></div>
<div class="t" style="left:723px;top:1540.26px;font-size:24.5px;font-weight:400;color:#000;letter-spacing:0.6px;">Laborwert</div>
<div class="t" style="left:986px;top:1540.26px;font-size:24.5px;font-weight:400;color:#000;letter-spacing:0.6px;">Rechnen</div>
<div style="position:absolute;left:974px;top:1531px;width:2px;height:41px;box-sizing:border-box;border-left:1px solid #B8BBC2;border-right:1px solid #fff;"></div>
<div class="t" style="left:1152px;top:1540.26px;font-size:24.5px;font-weight:400;color:#000;letter-spacing:0.6px;">Wert</div>
<div style="position:absolute;left:1140px;top:1531px;width:2px;height:41px;box-sizing:border-box;border-left:1px solid #B8BBC2;border-right:1px solid #fff;"></div>
<div class="t" style="left:1335px;top:1540.26px;font-size:24.5px;font-weight:400;color:#000;letter-spacing:0.6px;">Messeinheit</div>
<div style="position:absolute;left:1323px;top:1531px;width:2px;height:41px;box-sizing:border-box;border-left:1px solid #B8BBC2;border-right:1px solid #fff;"></div>
<div class="t" style="left:1516px;top:1540.26px;font-size:24.5px;font-weight:400;color:#000;letter-spacing:0.6px;">Spezifikation</div>
<div style="position:absolute;left:1504px;top:1531px;width:2px;height:41px;box-sizing:border-box;border-left:1px solid #B8BBC2;border-right:1px solid #fff;"></div>
<div class="t" style="left:1738px;top:1540.26px;font-size:24.5px;font-weight:400;color:#000;letter-spacing:0.6px;">Ausgabeei</div>
<div style="position:absolute;left:1726px;top:1531px;width:2px;height:41px;box-sizing:border-box;border-left:1px solid #B8BBC2;border-right:1px solid #fff;"></div>
<div style="position:absolute;left:712px;top:1572px;width:1149px;height:32px;box-sizing:border-box;background:#fff;"></div>
<div style="position:absolute;left:1141px;top:1572px;width:183px;height:32px;box-sizing:border-box;background:#FFFFDC;"></div>
<div style="position:absolute;left:1505px;top:1572px;width:222px;height:32px;box-sizing:border-box;background:#D6D9DF;"></div>
<div style="position:absolute;left:712px;top:1602px;width:1149px;height:2px;box-sizing:border-box;background:#111;"></div>
<div style="position:absolute;left:974px;top:1572px;width:2px;height:32px;box-sizing:border-box;background:#111;"></div>
<div style="position:absolute;left:1140px;top:1572px;width:2px;height:32px;box-sizing:border-box;background:#111;"></div>
<div style="position:absolute;left:1323px;top:1572px;width:2px;height:32px;box-sizing:border-box;background:#111;"></div>
<div style="position:absolute;left:1504px;top:1572px;width:2px;height:32px;box-sizing:border-box;background:#111;"></div>
<div style="position:absolute;left:1726px;top:1572px;width:2px;height:32px;box-sizing:border-box;background:#111;"></div>
<div style="position:absolute;left:1860px;top:1572px;width:2px;height:32px;box-sizing:border-box;background:#111;"></div>
<div class="t" style="left:723px;top:1576.26px;font-size:24.5px;font-weight:400;color:#000;">Eiweiß</div>
<svg style="position:absolute;left:991px;top:1573px" width="24" height="30"><use href="#iCalc"/></svg>
<div class="t" style="right:1428px;top:1576.26px;font-size:24.5px;font-weight:400;color:#000;">0,5365</div>
<div class="t" style="left:1335px;top:1576.26px;font-size:24.5px;font-weight:400;color:#000;">gr / kg</div>
<div class="chk" style="left:1511px;top:1575px;width:28px;height:27px;"></div>
<div class="t" style="left:1738px;top:1576.26px;font-size:24.5px;font-weight:400;color:#000;">100ml</div>
<div style="position:absolute;left:712px;top:1604px;width:1149px;height:32px;box-sizing:border-box;background:#fff;"></div>
<div style="position:absolute;left:1141px;top:1604px;width:183px;height:32px;box-sizing:border-box;background:#FFFFDC;"></div>
<div style="position:absolute;left:1505px;top:1604px;width:222px;height:32px;box-sizing:border-box;background:#F0F0F0;"></div>
<div style="position:absolute;left:712px;top:1634px;width:1149px;height:2px;box-sizing:border-box;background:#111;"></div>
<div style="position:absolute;left:974px;top:1604px;width:2px;height:32px;box-sizing:border-box;background:#111;"></div>
<div style="position:absolute;left:1140px;top:1604px;width:2px;height:32px;box-sizing:border-box;background:#111;"></div>
<div style="position:absolute;left:1323px;top:1604px;width:2px;height:32px;box-sizing:border-box;background:#111;"></div>
<div style="position:absolute;left:1504px;top:1604px;width:2px;height:32px;box-sizing:border-box;background:#111;"></div>
<div style="position:absolute;left:1726px;top:1604px;width:2px;height:32px;box-sizing:border-box;background:#111;"></div>
<div style="position:absolute;left:1860px;top:1604px;width:2px;height:32px;box-sizing:border-box;background:#111;"></div>
<div class="t" style="left:723px;top:1608.26px;font-size:24.5px;font-weight:400;color:#000;">Ester</div>
<svg style="position:absolute;left:991px;top:1605px" width="24" height="30"><use href="#iCalc"/></svg>
<div class="t" style="left:1335px;top:1608.26px;font-size:24.5px;font-weight:400;color:#000;">mg / la</div>
<div class="chk" style="left:1511px;top:1607px;width:28px;height:27px;"></div>
<div class="t" style="left:1738px;top:1608.26px;font-size:24.5px;font-weight:400;color:#000;">liter</div>
<div style="position:absolute;left:712px;top:1636px;width:1149px;height:32px;box-sizing:border-box;background:#fff;"></div>
<div style="position:absolute;left:1141px;top:1636px;width:183px;height:32px;box-sizing:border-box;background:#FFFFDC;"></div>
<div style="position:absolute;left:1505px;top:1636px;width:222px;height:32px;box-sizing:border-box;background:#F0F0F0;"></div>
<div style="position:absolute;left:712px;top:1666px;width:1149px;height:2px;box-sizing:border-box;background:#111;"></div>
<div style="position:absolute;left:974px;top:1636px;width:2px;height:32px;box-sizing:border-box;background:#111;"></div>
<div style="position:absolute;left:1140px;top:1636px;width:2px;height:32px;box-sizing:border-box;background:#111;"></div>
<div style="position:absolute;left:1323px;top:1636px;width:2px;height:32px;box-sizing:border-box;background:#111;"></div>
<div style="position:absolute;left:1504px;top:1636px;width:2px;height:32px;box-sizing:border-box;background:#111;"></div>
<div style="position:absolute;left:1726px;top:1636px;width:2px;height:32px;box-sizing:border-box;background:#111;"></div>
<div style="position:absolute;left:1860px;top:1636px;width:2px;height:32px;box-sizing:border-box;background:#111;"></div>
<div class="t" style="left:723px;top:1640.26px;font-size:24.5px;font-weight:400;color:#000;">Methanol</div>
<svg style="position:absolute;left:991px;top:1637px" width="24" height="30"><use href="#iCalc"/></svg>
<div class="t" style="right:1428px;top:1640.26px;font-size:24.5px;font-weight:400;color:#000;">1,2694</div>
<div class="t" style="left:1335px;top:1640.26px;font-size:24.5px;font-weight:400;color:#000;">gr / la</div>
<div class="chk" style="left:1511px;top:1639px;width:28px;height:27px;border:2px solid #1E3A5C;background:linear-gradient(#D4E0EE,#9AB2CE 60%,#B8CCE0);"></div>
<svg style="position:absolute;left:1511px;top:1639px" width="28" height="28" viewBox="0 0 28 28"><path d="M5 13 L7.5 12 L10.5 19 L22.5 2 L24.5 3 L11.5 23 L9.5 23 Z" fill="#000"/></svg>
<div class="t" style="left:1738px;top:1640.26px;font-size:24.5px;font-weight:400;color:#000;">100ml</div>
<div style="position:absolute;left:712px;top:1668px;width:1149px;height:32px;box-sizing:border-box;background:#fff;"></div>
<div style="position:absolute;left:1141px;top:1668px;width:183px;height:32px;box-sizing:border-box;background:#FFFFDC;"></div>
<div style="position:absolute;left:1505px;top:1668px;width:222px;height:32px;box-sizing:border-box;background:#F0F0F0;"></div>
<div style="position:absolute;left:712px;top:1698px;width:1149px;height:2px;box-sizing:border-box;background:#111;"></div>
<div style="position:absolute;left:974px;top:1668px;width:2px;height:32px;box-sizing:border-box;background:#111;"></div>
<div style="position:absolute;left:1140px;top:1668px;width:2px;height:32px;box-sizing:border-box;background:#111;"></div>
<div style="position:absolute;left:1323px;top:1668px;width:2px;height:32px;box-sizing:border-box;background:#111;"></div>
<div style="position:absolute;left:1504px;top:1668px;width:2px;height:32px;box-sizing:border-box;background:#111;"></div>
<div style="position:absolute;left:1726px;top:1668px;width:2px;height:32px;box-sizing:border-box;background:#111;"></div>
<div style="position:absolute;left:1860px;top:1668px;width:2px;height:32px;box-sizing:border-box;background:#111;"></div>
<div class="t" style="left:723px;top:1672.26px;font-size:24.5px;font-weight:400;color:#000;">PH-Wert</div>
<div class="t" style="left:1335px;top:1672.26px;font-size:24.5px;font-weight:400;color:#000;">Festwert</div>
<div class="chk" style="left:1511px;top:1671px;width:28px;height:27px;"></div>
<div class="t" style="left:1738px;top:1672.26px;font-size:24.5px;font-weight:400;color:#000;">liter</div>
<div style="position:absolute;left:1875px;top:1465px;width:814px;height:401px;box-sizing:border-box;border:1px solid #A4A7AD;box-shadow:inset 1px 1px 0 #fff;"></div>
<div class="t" style="left:2131px;transform:translateX(-50%);top:1484.26px;font-size:24.5px;font-weight:400;color:#000;">Zusätzliche Spezifikation</div>
<div class="btn" style="left:2389px;top:1474px;width:293px;height:47px;"><div class="bc" style="color:#000"><svg width="31" height="28"><use href="#iZut"/></svg><span style="margin-left:10px">Zutatenverzeichnis</span></div></div>
<div style="position:absolute;left:1883px;top:1530px;width:800px;height:332px;box-sizing:border-box;background:#fff;border:2px solid #8E9197;border-bottom:none;"></div>
<div style="position:absolute;left:2699px;top:650px;width:31px;height:1211px;box-sizing:border-box;background:linear-gradient(90deg,#E2E3E6,#F8F8F9 45%,#F2F3F4 80%,#E0E1E4);"></div>
<div style="position:absolute;left:2729px;top:649px;width:2px;height:1213px;box-sizing:border-box;background:#8E9197;"></div>
<div style="position:absolute;left:2699px;top:1861px;width:32px;height:2px;box-sizing:border-box;background:#8E9197;"></div>
<svg style="position:absolute;left:2705px;top:659px" width="20" height="18"><path d="M2 16 L9 2 L16 16 Z" fill="#3A3A3C"/></svg>
<svg style="position:absolute;left:2705px;top:1835px" width="20" height="18"><path d="M2 2 L9 16 L16 2 Z" fill="#3A3A3C"/></svg>
<div style="position:absolute;left:2699px;top:1466px;width:30px;height:361px;box-sizing:border-box;background:linear-gradient(90deg,#8E8F94 0%,#C4C5CA 18%,#CBCCD1 100%);"></div>
<div style="position:absolute;left:2699px;top:1800px;width:30px;height:27px;box-sizing:border-box;border-radius:0 0 30px 0;background:linear-gradient(#CBCCD0 0%,#6A6B70 55%,#2C2C30 100%);"></div>
<div style="position:absolute;left:2699px;top:685px;width:30px;height:782px;box-sizing:border-box;border-radius:0 30px 30px 0;border:3px solid #1C2C44;border-left:none;background:linear-gradient(90deg,#F4F8FB 0%,#B6C8DC 30%,#B8CCE0 45%,#D2E2EF 75%,#E6F3F9 100%);"></div>
<div style="position:absolute;left:3px;top:1866px;width:2735px;height:126px;box-sizing:border-box;"></div>
<div style="position:absolute;left:3px;top:1866px;width:2735px;height:3px;box-sizing:border-box;border-top:1px solid #A4A7AD;border-bottom:2px solid #fff;"></div>
<div class="t" style="left:1370px;transform:translateX(-50%);top:1872.26px;font-size:24.5px;font-weight:400;color:#000;">Erstellt am Montag, 26. Dezember 2005  von rzpro</div>
<div class="t" style="left:1370px;transform:translateX(-50%);top:1901.26px;font-size:24.5px;font-weight:400;color:#000;">zuletzt geändert am Montag, 25. August 2014  von rzpro</div>
<div style="position:absolute;left:3px;top:1927px;width:2735px;height:63px;box-sizing:border-box;border-top:1px solid #A4A7AD;box-shadow:inset 0 1px 0 #fff;border-right:2px solid #A4A7AD;"></div>
<div class="btn" style="left:11px;top:1935px;width:673px;height:47px;"><div class="bc" style="color:#000"><svg width="24" height="30"><use href="#iChk"/></svg><span style="margin-left:13px"><u style="text-decoration-thickness:2px;text-underline-offset:3px">S</u>peichern</span></div></div>
<div class="btn" style="left:1375px;top:1935px;width:672px;height:47px;"><div class="bc" style="color:#000"><svg width="28" height="28"><use href="#iGrid"/></svg><span style="margin-left:9px"><u style="text-decoration-thickness:2px;text-underline-offset:3px">H</u>ilfe</span></div></div>
<div class="btn" style="left:2057px;top:1935px;width:673px;height:47px;"><div class="bc" style="color:#000"><svg width="26" height="28"><use href="#iStop"/></svg><span style="margin-left:12px">Abbre<u style="text-decoration-thickness:2px;text-underline-offset:3px">c</u>hen</span></div></div></body></html>
